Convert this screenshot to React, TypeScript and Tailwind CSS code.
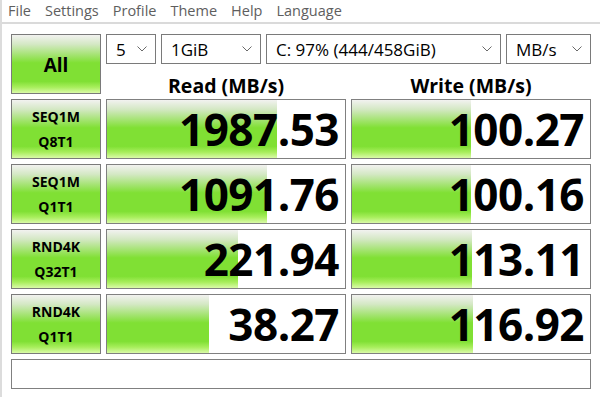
import React from 'react';

// CrystalDiskMark style main window
const green = 'bg-[linear-gradient(to_bottom,#f2f2f0_0%,#d4e8c4_16%,#80e034_48%,#80e034_80%,#a8ee5c_90%,#dafaa8_100%)]';

const rows = [
  { a: 'SEQ1M', b: 'Q8T1', read: '1987.53', rw: 170, write: '100.27', ww: 119 },
  { a: 'SEQ1M', b: 'Q1T1', read: '1091.76', rw: 160, write: '100.16', ww: 119 },
  { a: 'RND4K', b: 'Q32T1', read: '221.94', rw: 131, write: '113.11', ww: 120 },
  { a: 'RND4K', b: 'Q1T1', read: '38.27', rw: 102, write: '116.92', ww: 121 },
];

function Chevron() {
  return (
    <svg width="10" height="6" viewBox="0 0 10 6" className="shrink-0">
      <polyline points="0.5,0.5 5,5 9.5,0.5" fill="none" stroke="#6a6a6a" strokeWidth="1" />
    </svg>
  );
}

function Select({ w, label }: { w: string; label: string }) {
  return (
    <div className={`${w} h-[30px] flex items-center justify-between border border-[#7a7a7a] bg-white pl-[9px] pr-[8px] text-[17px] text-black`}>
      <span className="leading-none">{label}</span>
      <Chevron />
    </div>
  );
}

function Value({ text, width }: { text: string; width: number }) {
  return (
    <div className="relative h-[60px] w-[240px] border border-[#808080] bg-white overflow-hidden">
      <div className={`absolute left-0 top-0 bottom-0 ${green}`} style={{ width }} />
      <div className="relative flex h-full items-center justify-end pr-[6px] text-[44px] font-bold leading-none tracking-[-0.5px] text-black">
        {text}
      </div>
    </div>
  );
}

export default function App() {
  return (
    <div className="w-[600px] h-[397px] bg-white border-l-2 border-[#dcdcdc] font-['Open_Sans',sans-serif] overflow-hidden">
      {/* Barra de menu */}
      <div className="h-[24px] flex items-center gap-[14px] pl-[6px] border-b-2 border-[#dadada] text-[14.5px] text-[#5e5e5e]">
        <span>File</span>
        <span>Settings</span>
        <span>Profile</span>
        <span>Theme</span>
        <span>Help</span>
        <span>Language</span>
      </div>

      <div className="pl-[9px] pt-[10px] flex flex-col gap-[5px]">
        {/* Topo: botao All + selects + cabecalhos */}
        <div className="flex gap-[5px]">
          <div className={`w-[90px] h-[60px] border border-[#7a7a7a] ${green} flex items-center justify-center pt-[3px] text-[19px] font-bold text-black`}>
            All
          </div>
          <div className="flex flex-col">
            <div className="flex gap-[5px]">
              <Select w="w-[50px]" label="5" />
              <Select w="w-[100px]" label="1GiB" />
              <Select w="w-[235px]" label="C: 97% (444/458GiB)" />
              <Select w="w-[85px]" label="MB/s" />
            </div>
            <div className="flex h-[30px] items-start gap-[5px] pt-[12px] text-[19.5px] font-bold text-black leading-none">
              <div className="w-[240px] text-center">Read (MB/s)</div>
              <div className="w-[240px] text-center">Write (MB/s)</div>
            </div>
          </div>
        </div>

        {/* Linhas de resultado */}
        {rows.map((r, i) => (
          <div key={i} className="flex gap-[5px]">
            <div className={`w-[90px] h-[60px] border border-[#7a7a7a] ${green} flex flex-col items-center justify-center text-[14px] font-bold leading-[25px] text-black`}>
              <span>{r.a}</span>
              <span>{r.b}</span>
            </div>
            <Value text={r.read} width={r.rw} />
            <Value text={r.write} width={r.ww} />
          </div>
        ))}

        {/* Caixa de comentario */}
        <div className="w-[580px] h-[30px] border border-[#808080] bg-white" />
      </div>
    </div>
  );
}
